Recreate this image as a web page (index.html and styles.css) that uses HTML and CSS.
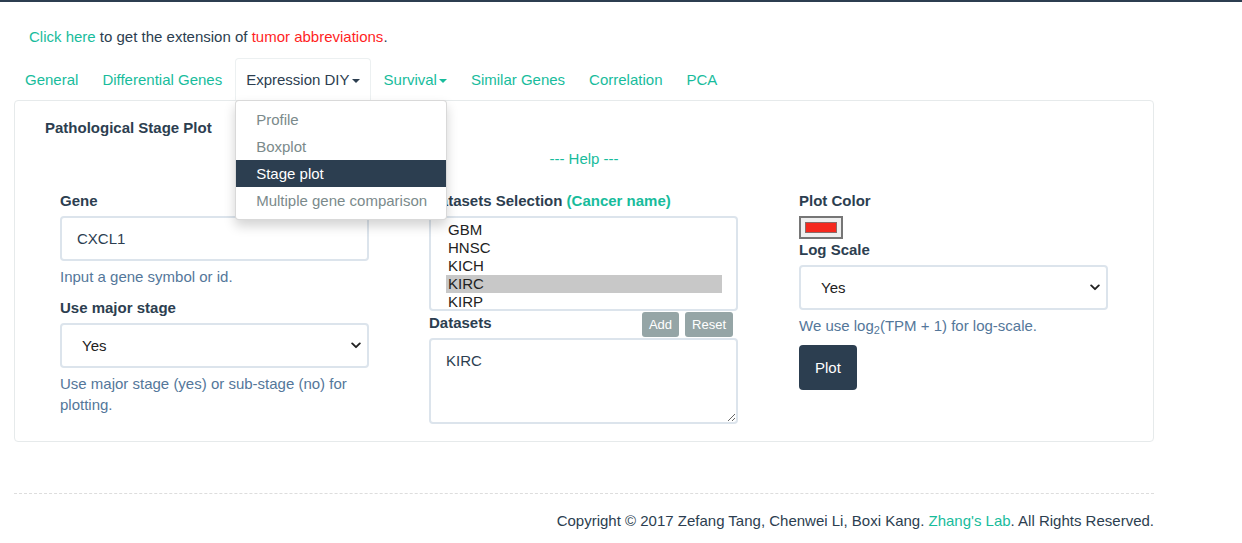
FILE: index.html
```html
<!DOCTYPE html>
<html>
<head>
<meta charset="utf-8">
<link rel="stylesheet" href="styles.css">
</head>
<body>
<div class="topbar"></div>
<div class="container">
  <p class="intro"><a class="green">Click here</a> to get the extension of <a class="red">tumor abbreviations</a>.</p>
  <ul class="tabs">
    <li><a>General</a></li>
    <li><a>Differential Genes</a></li>
    <li class="active dropdown">
      <a>Expression DIY<span class="caret"></span></a>
      <ul class="menu">
        <li><a>Profile</a></li>
        <li><a>Boxplot</a></li>
        <li class="sel"><a>Stage plot</a></li>
        <li><a>Multiple gene comparison</a></li>
      </ul>
    </li>
    <li><a>Survival<span class="caret"></span></a></li>
    <li><a>Similar Genes</a></li>
    <li><a>Correlation</a></li>
    <li><a>PCA</a></li>
  </ul>
  <div class="panel">
    <div class="heading">Pathological Stage Plot</div>
    <div class="help-link"><a class="green">--- Help ---</a></div>
    <div class="grid">
      <div class="col">
        <div class="label">Gene</div>
        <input class="control" type="text" value="CXCL1">
        <div class="help">Input a gene symbol or id.</div>
        <div class="label">Use major stage</div>
        <div class="control select"><span>Yes</span><svg width="10" height="7" viewBox="0 0 10 7"><path d="M1.2 1.4 L5 5.2 L8.8 1.4" fill="none" stroke="#222" stroke-width="1.9" stroke-linecap="round" stroke-linejoin="round"/></svg></div>
        <div class="help">Use major stage (yes) or sub-stage (no) for plotting.</div>
      </div>
      <div class="col">
        <div class="label">Datasets Selection <span class="green">(Cancer name)</span></div>
        <div class="multi">
          <div class="opt">GBM</div>
          <div class="opt">HNSC</div>
          <div class="opt">KICH</div>
          <div class="opt on">KIRC</div>
          <div class="opt">KIRP</div>
        </div>
        <div class="ds-row">
          <div class="label">Datasets</div>
          <div class="btns"><span class="btn-gray">Add</span><span class="btn-gray">Reset</span></div>
        </div>
        <textarea class="control area" readonly>KIRC</textarea>
      </div>
      <div class="col">
        <div class="label">Plot Color</div>
        <div class="swatch"><div class="swatch-in"></div></div>
        <div class="label">Log Scale</div>
        <div class="control select"><span>Yes</span><svg width="10" height="7" viewBox="0 0 10 7"><path d="M1.2 1.4 L5 5.2 L8.8 1.4" fill="none" stroke="#222" stroke-width="1.9" stroke-linecap="round" stroke-linejoin="round"/></svg></div>
        <div class="help">We use log<sub>2</sub>(TPM + 1) for log-scale.</div>
        <div class="btn-dark">Plot</div>
      </div>
    </div>
  </div>
  <div class="footer">Copyright © 2017 Zefang Tang, Chenwei Li, Boxi Kang. <a class="green">Zhang's Lab</a>. All Rights Reserved.</div>
</div>
</body>
</html>
```
FILE: styles.css
```css
* { box-sizing: border-box; }
html, body { margin: 0; padding: 0; background: #fff; }
body {
  font-family: "Liberation Sans", Arial, sans-serif;
  font-size: 15px;
  line-height: 21px;
  color: #2c3e50;
}
.topbar { height: 2px; background: #2c3e50; }
.container { width: 1140px; margin-left: 14px; }
.green { color: #18bc9c; }
.red { color: #ff1f1f; }
.intro { margin: 24px 0 11px 15px; }

.tabs {
  list-style: none; margin: 0; padding: 0;
  display: flex; height: 42px;
}
.tabs > li { margin-right: 2px; position: relative; }
.tabs > li > a {
  display: block; padding: 10px 10px; border: 1px solid transparent;
  border-bottom: none; border-radius: 4px 4px 0 0;
  color: #18bc9c; height: 42px;
}
.tabs > li.active > a { color: #2c3e50; border-color: #ecf0f1; background: #fff; }
.caret {
  display: inline-block; width: 0; height: 0; margin-left: 2px;
  vertical-align: middle;
  border-top: 4px solid currentColor;
  border-left: 4px solid transparent;
  border-right: 4px solid transparent;
}
.menu {
  position: absolute; top: 42px; left: 0; z-index: 10;
  list-style: none; margin: 0; padding: 5px 0;
  width: 212px; background: #fff;
  border: 1px solid rgba(0,0,0,.15); border-radius: 4px;
  box-shadow: 0 6px 12px rgba(0,0,0,.175);
}
.menu li a { display: block; padding: 3px 20px; color: #7b8a8b; white-space: nowrap; }
.menu li.sel a { background: #2c3e50; color: #fff; }

.panel {
  border: 1px solid #e6eaeb; border-radius: 4px;
  padding: 16px 30px 16px;
}
.heading { font-weight: bold; }
.help-link { text-align: center; margin-top: 10px; }
.grid {
  display: grid; grid-template-columns: 309px 310px 309px; column-gap: 60px;
  margin: 21px 15px 0;
}
.col { display: flex; flex-direction: column; align-items: flex-start; }
.label { font-weight: bold; margin-bottom: 5px; }
.control {
  width: 100%; height: 45px; border: 2px solid #dce4ec; border-radius: 4px;
  padding: 10px 15px; font: inherit; color: #2c3e50; background: #fff;
}
input.control { outline: none; }
.select { display: flex; justify-content: space-between; align-items: center; padding: 10px 6px 10px 20px; color: #222; }
.select svg { display: block; }
.help { color: #54779a; margin-top: 5px; margin-bottom: 10px; }
.help sub { font-size: 11px; line-height: 0; vertical-align: -3px; }

.multi {
  width: 309px; height: 95px; border: 2px solid #dce4ec; border-radius: 4px;
  padding: 3px 14px 2px 15px; overflow: hidden; color: #222;
}
.opt { height: 18px; line-height: 18px; padding-left: 2px; }
.opt.on { background: #c8c8c8; }
.ds-row {
  width: 309px; display: flex; justify-content: space-between; align-items: flex-start;
  margin-top: 1px; height: 26px;
}
.ds-row .label { margin: 0; line-height: 21px; }
.btns { display: flex; gap: 6px; margin-right: 5px; }
.btn-gray {
  background: #95a5a6; color: #fff; font-size: 13px; line-height: 25px;
  height: 25px; padding: 0 7px; border-radius: 3px;
}
.area {
  width: 309px; height: 86px; resize: vertical; line-height: 21px; color: #2c3e50;
}

.swatch {
  width: 44px; height: 23px; border: 2px solid #767676; background: #efefef;
  padding: 4px 4px; margin-bottom: 0;
}
.swatch-in { width: 32px; height: 11px; background: #f5281e; border: 1px solid #8a6a68; margin-top: 0; }
.col .swatch + .label { margin-top: 0; }
.btn-dark {
  margin-top: -1px; background: #2c3e50; color: #fff; border-radius: 4px;
  padding: 0 16px; height: 45px; line-height: 46px;
}

.footer {
  margin-top: 51px; border-top: 1px dashed #ddd;
  padding-top: 16px; text-align: right;
}
```
